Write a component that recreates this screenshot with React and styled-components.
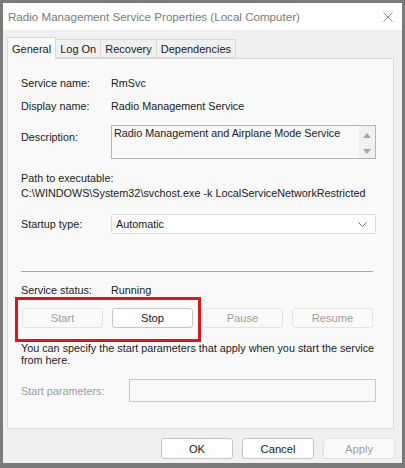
import React from 'react';
import styled, { createGlobalStyle } from 'styled-components';

const GlobalStyle = createGlobalStyle`
  html, body {
    margin: 0;
    padding: 0;
    background: #7b7b7b;
  }
  body {
    font-family: 'Liberation Sans', Arial, sans-serif;
    font-size: 10.8px;
    color: #1a1a1a;
  }
`;

const Window = styled.div`
  margin: 3px 3px 5px 3px;
  height: 460px;
  background: #f0f0f0;
  display: flex;
  flex-direction: column;
`;

const TitleBar = styled.div`
  height: 27px;
  background: #ffffff;
  display: flex;
  align-items: center;
  justify-content: space-between;
  padding: 0 9px 0 5px;
`;

const Title = styled.span`
  font-size: 11.6px;
  color: #7a7a7a;
`;

const Body = styled.div`
  padding: 6px 8px 0 4px;
`;

const TabStrip = styled.div`
  display: flex;
  align-items: flex-end;
  height: 22px;
`;

const Tab = styled.div`
  height: ${(p) => (p.$active ? '22px' : '19px')};
  padding: 0 4px;
  display: flex;
  align-items: center;
  justify-content: center;
  background: ${(p) => (p.$active ? '#f9f9f9' : '#f0f0f0')};
  border: 1px solid #d9d9d9;
  border-bottom: ${(p) => (p.$active ? 'none' : '1px solid #d9d9d9')};
  border-left: ${(p) => (p.$first ? '1px solid #d9d9d9' : 'none')};
  box-sizing: border-box;
  font-size: 11px;
  position: relative;
  z-index: ${(p) => (p.$active ? 2 : 1)};
  margin-bottom: ${(p) => (p.$active ? '-1px' : '0')};
`;

const Panel = styled.div`
  height: 371px;
  box-sizing: border-box;
  border: 1px solid #d9d9d9;
  background: #f9f9f9;
  padding: 16px 17px 0 13px;
  display: flex;
  flex-direction: column;
`;

const Row = styled.div`
  display: flex;
  align-items: ${(p) => p.$align || 'center'};
  margin-top: ${(p) => p.$top || 0}px;
  line-height: 16px;
`;

const Label = styled.div`
  width: 90px;
  flex-shrink: 0;
  color: ${(p) => (p.$disabled ? '#9c9c9c' : '#1a1a1a')};
  margin-top: ${(p) => p.$offset || 0}px;
`;

const Value = styled.div`
  white-space: nowrap;
`;

const TextArea = styled.div`
  flex: 1;
  height: 34px;
  box-sizing: border-box;
  border: 1px solid #b5b5b5;
  background: #f9f9f9;
  display: flex;
  justify-content: space-between;
`;

const AreaText = styled.div`
  padding: 0 2px;
  line-height: 15px;
`;

const ScrollCol = styled.div`
  width: 16px;
  background: #f0f0f0;
  display: flex;
  flex-direction: column;
  align-items: center;
  justify-content: space-between;
  padding: 7px 0 4px;
`;

const PathBlock = styled.div`
  margin-top: 12px;
  line-height: 15px;
  white-space: nowrap;
`;

const Select = styled.div`
  flex: 1;
  height: 20px;
  box-sizing: border-box;
  border: 1px solid #dcdcdc;
  border-radius: 2px;
  background: #ffffff;
  display: flex;
  align-items: center;
  justify-content: space-between;
  padding: 0 8px 0 4px;
`;

const Separator = styled.div`
  height: 1px;
  background: #a8a8a8;
  margin: 37px 3px 0 0;
`;

const ButtonRow = styled.div`
  position: relative;
  display: flex;
  gap: 9px;
  margin-top: 10px;
  padding-left: 1px;
`;

const Button = styled.div`
  width: ${(p) => p.$width || 81}px;
  height: ${(p) => p.$height || 20}px;
  box-sizing: border-box;
  border-radius: 3px;
  border: 1px solid ${(p) => (p.$disabled ? '#e2e2e2' : '#c6c6c6')};
  background: ${(p) => (p.$disabled ? '#f9f9f9' : '#fdfdfd')};
  color: ${(p) => (p.$disabled ? '#9e9e9e' : '#1a1a1a')};
  display: flex;
  align-items: center;
  justify-content: center;
  font-size: 11.2px;
`;

const Highlight = styled.div`
  position: absolute;
  left: -6px;
  top: -11px;
  width: 186px;
  height: 45px;
  box-sizing: border-box;
  border: 3px solid #e0151c;
`;

const Hint = styled.div`
  margin-top: 14px;
  line-height: 12px;
  white-space: nowrap;
`;

const ParamBox = styled.div`
  flex: 1;
  height: 23px;
  box-sizing: border-box;
  border: 1px solid #c9c9c9;
  background: #f9f9f9;
  margin-left: 18px;
`;

const Footer = styled.div`
  display: flex;
  justify-content: flex-end;
  gap: 9px;
  margin: 9px -1px 0 0;
`;

const CloseIcon = () => (
  <svg width="10" height="10" viewBox="0 0 10 10">
    <path d="M0.5 0.5 L9.5 9.5 M9.5 0.5 L0.5 9.5" stroke="#8a8a8a" strokeWidth="1" fill="none" />
  </svg>
);

const Chevron = () => (
  <svg width="9" height="5" viewBox="0 0 9 5">
    <path d="M0.5 0.5 L4.5 4.5 L8.5 0.5" stroke="#6e6e6e" strokeWidth="1" fill="none" />
  </svg>
);

const Arrow = ({ down }) => (
  <svg width="8" height="5" viewBox="0 0 8 5">
    <path d={down ? 'M0 0 L8 0 L4 5 Z' : 'M0 5 L8 5 L4 0 Z'} fill="#a6a6a6" />
  </svg>
);

const App = () => (
  <>
    <GlobalStyle />
    <Window>
      <TitleBar>
        <Title>Radio Management Service Properties (Local Computer)</Title>
        <CloseIcon />
      </TitleBar>
      <Body>
        <TabStrip>
          <Tab $active $first>General</Tab>
          <Tab>Log On</Tab>
          <Tab>Recovery</Tab>
          <Tab>Dependencies</Tab>
        </TabStrip>
        <Panel>
          <Row>
            <Label>Service name:</Label>
            <Value>RmSvc</Value>
          </Row>
          <Row $top={7}>
            <Label>Display name:</Label>
            <Value>Radio Management Service</Value>
          </Row>
          <Row $top={11} $align="flex-start">
            <Label $offset={4}>Description:</Label>
            <TextArea>
              <AreaText>Radio Management and Airplane Mode Service</AreaText>
              <ScrollCol>
                <Arrow />
                <Arrow down />
              </ScrollCol>
            </TextArea>
          </Row>
          <PathBlock>
            <div>Path to executable:</div>
            <div>C:\WINDOWS\System32\svchost.exe -k LocalServiceNetworkRestricted</div>
          </PathBlock>
          <Row $top={13}>
            <Label>Startup type:</Label>
            <Select>
              <span>Automatic</span>
              <Chevron />
            </Select>
          </Row>
          <Separator />
          <Row $top={10}>
            <Label>Service status:</Label>
            <Value>Running</Value>
          </Row>
          <ButtonRow>
            <Button $disabled>Start</Button>
            <Button>Stop</Button>
            <Button $disabled>Pause</Button>
            <Button $disabled>Resume</Button>
            <Highlight />
          </ButtonRow>
          <Hint>
            You can specify the start parameters that apply when you start the service
            <br />
            from here.
          </Hint>
          <Row $top={13}>
            <Label $disabled>Start parameters:</Label>
            <ParamBox />
          </Row>
        </Panel>
        <Footer>
          <Button $width={72} $height={21}>OK</Button>
          <Button $width={72} $height={21}>Cancel</Button>
          <Button $width={72} $height={21} $disabled>Apply</Button>
        </Footer>
      </Body>
    </Window>
  </>
);

export default App;
